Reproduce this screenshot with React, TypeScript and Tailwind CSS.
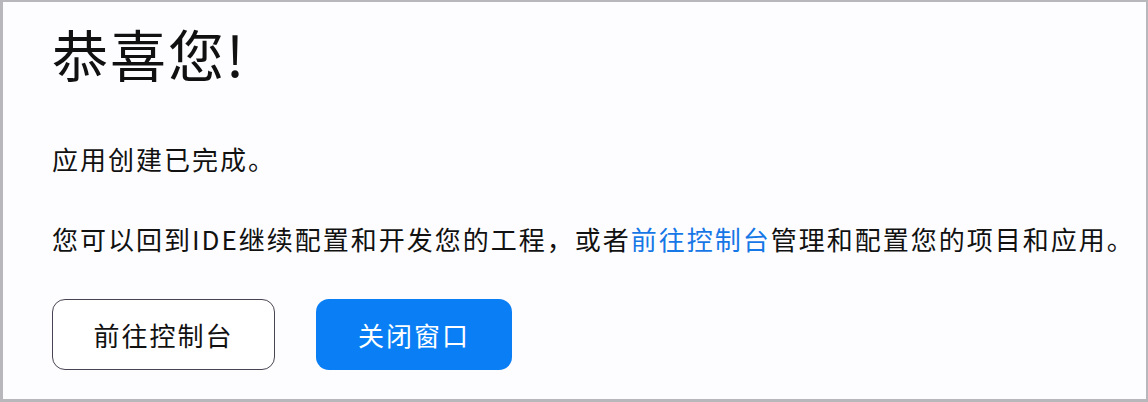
export default function App() {
  return (
    <div
      className="w-[1148px] h-[402px] bg-[#fdfdff] border-[#b8b8bc] border-t-2 border-l-[3px] border-r-2 border-b-[3px] pl-[49px] pt-[18px] text-[#111] overflow-hidden"
      style={{ fontFamily: '"Noto Sans CJK SC", "Noto Sans", sans-serif' }}
    >
      <h1 className="text-[56px] leading-[66px] font-normal tracking-[2px]">恭喜您!</h1>
      <p className="mt-[55px] text-[26px] leading-[36px] tracking-[2px]">应用创建已完成。</p>
      <p className="mt-[44px] text-[26px] leading-[36px] tracking-[2px]">
        您可以回到IDE继续配置和开发您的工程，或者
        <a className="text-[#1677e6]">前往控制台</a>
        管理和配置您的项目和应用。
      </p>
      <div className="mt-[42px] flex gap-[41px]">
        <button className="w-[223px] h-[71px] rounded-[13px] border border-[#4a4452] bg-white text-[26px] tracking-[2px] text-[#111]">
          前往控制台
        </button>
        <button className="w-[196px] h-[71px] rounded-[13px] bg-[#0a7ff5] text-[26px] tracking-[2px] text-white">
          关闭窗口
        </button>
      </div>
    </div>
  );
}
